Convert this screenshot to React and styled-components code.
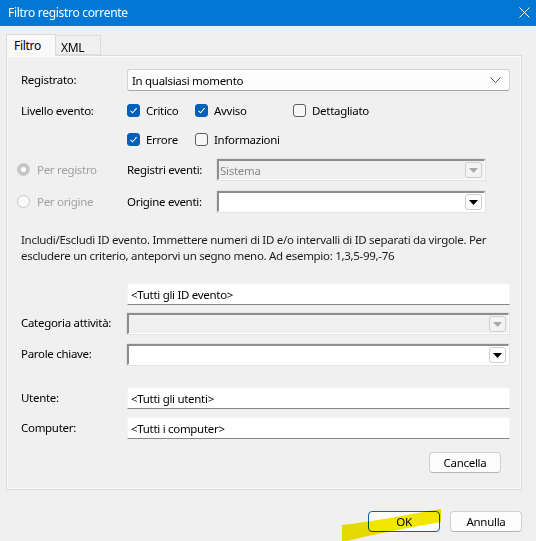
import React from "react";
import styled, { createGlobalStyle } from "styled-components";

const GlobalStyle = createGlobalStyle`
  html, body {
    margin: 0;
    padding: 0;
    background: #f0f0f0;
  }
  body {
    font-family: "Noto Sans", "Open Sans", sans-serif;
    font-size: 11.5px;
    letter-spacing: -0.3px;
    color: #000;
  }
`;

function Checkbox({ checked, label }) {
  return (
    <CheckItem>
      <Box checked={checked}>
        {checked && (
          <svg width="9" height="9" viewBox="0 0 9 9">
            <path d="M1.5 4.8 L3.6 6.8 L7.6 2.2" fill="none" stroke="#fff" strokeWidth="1.1" />
          </svg>
        )}
      </Box>
      {label}
    </CheckItem>
  );
}

function Radio({ selected, label }) {
  return (
    <RadioItem>
      <Circle selected={selected} />
      {label}
    </RadioItem>
  );
}

function Combo({ disabled, wide, value }) {
  return (
    <ComboBox disabled={disabled} wide={wide}>
      <span>{value}</span>
      <DropBtn disabled={disabled}>
        <svg width="9" height="5" viewBox="0 0 9 5">
          <path d="M0 0 L9 0 L4.5 5 Z" fill={disabled ? "#a9a9a9" : "#000"} />
        </svg>
      </DropBtn>
    </ComboBox>
  );
}

function App() {
  return (
    <Window>
      <GlobalStyle />
      <TitleBar>
        <span>Filtro registro corrente</span>
        <svg width="11" height="11" viewBox="0 0 11 11">
          <path d="M0.5 0.5 L10.5 10.5 M10.5 0.5 L0.5 10.5" stroke="#fff" strokeWidth="1" />
        </svg>
      </TitleBar>
      <Body>
        <Tabs>
          <Tab active>Filtro</Tab>
          <Tab>XML</Tab>
        </Tabs>
        <Panel>
          <Row>
            <Label>Registrato:</Label>
            <Select>
              <span>In qualsiasi momento</span>
              <svg width="11" height="6" viewBox="0 0 11 6">
                <path d="M0.5 0.5 L5.5 5.5 L10.5 0.5" fill="none" stroke="#555" strokeWidth="1" />
              </svg>
            </Select>
          </Row>
          <Row top mt={12}>
            <Label>Livello evento:</Label>
            <CheckGrid>
              <Checkbox checked label="Critico" />
              <Checkbox checked label="Avviso" />
              <Checkbox label="Dettagliato" />
              <Checkbox checked label="Errore" />
              <Checkbox label="Informazioni" />
            </CheckGrid>
          </Row>
          <Row mt={12}>
            <RadioCell>
              <Radio selected label="Per registro" />
            </RadioCell>
            <SubLabel>Registri eventi:</SubLabel>
            <Combo disabled value="Sistema" />
          </Row>
          <Row mt={11}>
            <RadioCell>
              <Radio label="Per origine" />
            </RadioCell>
            <SubLabel>Origine eventi:</SubLabel>
            <Combo />
          </Row>
          <Description>
            Includi/Escludi ID evento. Immettere numeri di ID e/o intervalli di ID separati da virgole. Per
            escludere un criterio, anteporvi un segno meno. Ad esempio: 1,3,5-99,-76
          </Description>
          <Row mt={19}>
            <Label />
            <Edit>&lt;Tutti gli ID evento&gt;</Edit>
          </Row>
          <Row mt={8}>
            <Label>Categoria attività:</Label>
            <Combo disabled wide />
          </Row>
          <Row mt={10}>
            <Label>Parole chiave:</Label>
            <Combo wide />
          </Row>
          <Row mt={22}>
            <Label>Utente:</Label>
            <Edit>&lt;Tutti gli utenti&gt;</Edit>
          </Row>
          <Row mt={8}>
            <Label>Computer:</Label>
            <Edit>&lt;Tutti i computer&gt;</Edit>
          </Row>
          <ClearRow>
            <Button>Cancella</Button>
          </ClearRow>
        </Panel>
        <Footer>
          <Button primary>OK</Button>
          <Button>Annulla</Button>
        </Footer>
      </Body>
      <Highlight width="536" height="541" viewBox="0 0 536 541">
        <path
          d="M342 525 C370 522 405 515 441 509 L441 522 C412 527 380 533 347 541 L342 541 Z"
          fill="#f3e800"
        />
      </Highlight>
    </Window>
  );
}

const Window = styled.div`
  position: relative;
  width: 536px;
  height: 541px;
  background: #f0f0f0;
  overflow: hidden;
  display: flex;
  flex-direction: column;
`;

const TitleBar = styled.div`
  height: 25px;
  background: #0078d4;
  color: #fff;
  display: flex;
  align-items: center;
  justify-content: space-between;
  padding: 0 6px 1px 8px;
  font-size: 12px;
`;

const Body = styled.div`
  display: flex;
  flex-direction: column;
  padding: 8px 14px 0 6px;
`;

const Tabs = styled.div`
  display: flex;
  align-items: flex-end;
  height: 21px;
`;

const Tab = styled.div`
  height: ${(p) => (p.active ? "22px" : "20px")};
  margin-bottom: ${(p) => (p.active ? "-1px" : "0")};
  padding: ${(p) => (p.active ? "2px 0 0 7px" : "3px 0 0 5px")};
  width: ${(p) => (p.active ? "50px" : "45px")};
  box-sizing: border-box;
  font-size: 12px;
  background: ${(p) => (p.active ? "#f9f9f9" : "#f0f0f0")};
  border: 1px solid #dcdcdc;
  border-bottom: ${(p) => (p.active ? "none" : "1px solid #dcdcdc")};
  border-left: ${(p) => (p.active ? "1px solid #dcdcdc" : "none")};
  position: relative;
  z-index: ${(p) => (p.active ? 1 : 0)};
`;

const Panel = styled.div`
  border: 1px solid #dcdcdc;
  box-shadow: inset 1px 1px 0 #fbfbfb, inset -1px -1px 0 #fbfbfb;
  width: 516px;
  box-sizing: border-box;
  padding: 13px 11px 16px 14px;
  display: flex;
  flex-direction: column;
`;

const Row = styled.div`
  display: flex;
  align-items: ${(p) => (p.top ? "flex-start" : "center")};
  margin-top: ${(p) => p.mt || 0}px;
`;

const Label = styled.div`
  width: 106px;
  flex: none;
  padding-bottom: 2px;
`;

const SubLabel = styled.div`
  width: 90px;
  flex: none;
`;

const Select = styled.div`
  flex: 1;
  height: 22px;
  box-sizing: border-box;
  background: #fdfdfd;
  border: 1px solid #d3d3d3;
  border-bottom-color: #a8a8a8;
  border-radius: 3px;
  display: flex;
  align-items: center;
  justify-content: space-between;
  padding: 0 8px 0 4px;
`;

const CheckGrid = styled.div`
  display: grid;
  grid-template-columns: 68px 98px auto;
  row-gap: 13px;
  margin-top: -1px;
`;

const CheckItem = styled.label`
  display: flex;
  align-items: center;
  gap: 6px;
  height: 16px;
`;

const Box = styled.span`
  width: 13px;
  height: 13px;
  box-sizing: border-box;
  border-radius: 3px;
  display: flex;
  align-items: center;
  justify-content: center;
  background: ${(p) => (p.checked ? "#005fb8" : "#f7f7f7")};
  border: 1px solid ${(p) => (p.checked ? "#005fb8" : "#5d5d5d")};
`;

const RadioCell = styled.div`
  width: 110px;
  margin-left: -4px;
  flex: none;
`;

const RadioItem = styled.div`
  display: flex;
  align-items: center;
  gap: 7px;
  color: #a0a0a0;
`;

const Circle = styled.span`
  width: 13px;
  height: 13px;
  box-sizing: border-box;
  border-radius: 50%;
  border: 1px solid #c8c8c8;
  background: ${(p) => (p.selected ? "#c6c6c6" : "#f9f9f9")};
  display: flex;
  align-items: center;
  justify-content: center;
  &::after {
    content: "";
    display: ${(p) => (p.selected ? "block" : "none")};
    width: 5px;
    height: 5px;
    border-radius: 50%;
    background: #fff;
  }
`;

const ComboBox = styled.div`
  flex: 1;
  max-width: ${(p) => (p.wide ? "none" : "268px")};
  height: 21px;
  box-sizing: border-box;
  background: ${(p) => (p.disabled ? "#f0f0f0" : "#fff")};
  color: #8a8a8a;
  border-top: 2px solid #8d8d8d;
  border-left: 2px solid #8d8d8d;
  border-right: 1px solid #fff;
  border-bottom: 1px solid #fff;
  outline: 1px solid #e3e3e3;
  display: flex;
  align-items: center;
  justify-content: space-between;
  padding: 0 2px 0 1px;
  margin-right: ${(p) => (p.wide ? "1px" : "0")};
`;

const DropBtn = styled.span`
  width: 17px;
  height: 16px;
  box-sizing: border-box;
  border: 1px solid #cfcfcf;
  border-radius: 3px;
  background: ${(p) => (p.disabled ? "#f3f3f3" : "#fdfdfd")};
  display: flex;
  align-items: center;
  justify-content: center;
`;

const Description = styled.p`
  margin: 20px 0 0;
  line-height: 16px;
  color: #1b1b1b;
`;

const Edit = styled.div`
  flex: 1;
  height: 22px;
  box-sizing: border-box;
  background: #fff;
  border: 1px solid #f4f4f4;
  border-bottom: 1px solid #868686;
  display: flex;
  align-items: center;
  padding: 0 3px;
`;

const ClearRow = styled.div`
  display: flex;
  justify-content: flex-end;
  padding-right: 9px;
  margin-top: 13px;
`;

const Button = styled.button`
  width: 72px;
  height: 21px;
  box-sizing: border-box;
  font: inherit;
  letter-spacing: inherit;
  color: #000;
  background: #fdfdfd;
  border: 1px solid ${(p) => (p.primary ? "#005fb8" : "#d0d0d0")};
  border-bottom-color: ${(p) => (p.primary ? "#005fb8" : "#b5b5b5")};
  border-radius: 4px;
  padding: 0;
`;

const Footer = styled.div`
  display: flex;
  justify-content: flex-end;
  gap: 10px;
  margin-top: 21px;
`;

const Highlight = styled.svg`
  position: absolute;
  left: 0;
  top: 0;
  pointer-events: none;
  mix-blend-mode: multiply;
`;

export default App;
